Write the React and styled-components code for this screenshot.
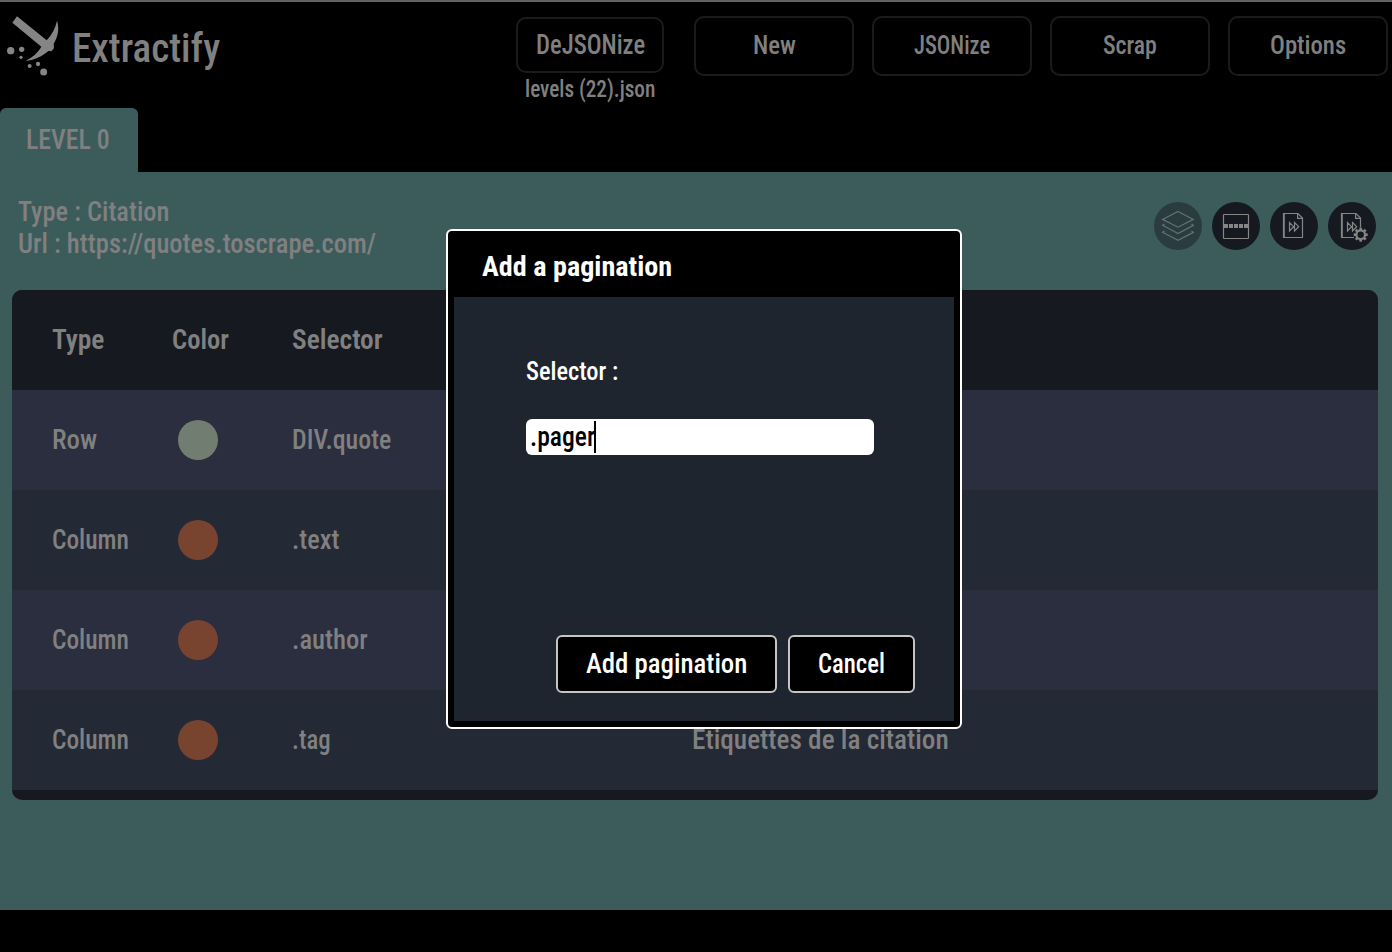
import React, { useLayoutEffect, useRef, useState } from "react";
import styled, { createGlobalStyle } from "styled-components";

const Global = createGlobalStyle`
  * { box-sizing: border-box; }
  body { margin: 0; background: #000; font-family: Roboto, "Open Sans", sans-serif; }
`;

const LabelBox = styled.span`
  display: block;
  flex: none;
  width: ${(p) => p.$width}px;
  height: ${(p) => p.$line}px;
  line-height: ${(p) => p.$line}px;
  font-size: ${(p) => p.$size}px;
  font-weight: ${(p) => p.$weight};
  color: ${(p) => p.$color};
  white-space: nowrap;
`;

const LabelInk = styled.span`
  display: inline-block;
  font-stretch: 75%;
  transform-origin: 0 50%;
`;

/* Condensed text, squeezed horizontally to the given width. */
function Label({ children, width, size = 28, weight = 460, color = "#808080", line = 32 }) {
  const ref = useRef(null);
  const [scale, setScale] = useState(1);
  useLayoutEffect(() => {
    setScale(width / ref.current.offsetWidth);
  }, [width, children]);
  return (
    <LabelBox $width={width} $size={size} $weight={weight} $color={color} $line={line}>
      <LabelInk ref={ref} style={{ transform: `scaleX(${scale})` }}>{children}</LabelInk>
    </LabelBox>
  );
}

const Page = styled.div`
  display: flex;
  flex-direction: column;
  width: 1392px;
  height: 952px;
  overflow: hidden;
  background: #000;
  border-top: 2px solid #626262;
`;

const Header = styled.header`
  display: flex;
  flex: none;
  height: 106px;
  padding: 14px 4px 0 6px;
`;

const Brand = styled.div`
  display: flex;
  flex: 1;
  gap: 12px;
  margin-top: -2px;
`;

const BrandName = styled.div`
  padding-top: 11px;
`;

const Nav = styled.nav`
  display: flex;
  gap: 18px;
`;

const Upload = styled.div`
  display: flex;
  flex-direction: column;
  align-items: center;
  width: 148px;
  margin: 1px 12px 0 0;
`;

const NavButton = styled.button`
  display: flex;
  justify-content: center;
  align-items: center;
  flex: none;
  width: ${(p) => p.$width || 160}px;
  height: ${(p) => p.$height || 60}px;
  padding: 0 0 ${(p) => (p.$height ? 0 : 2)}px;
  background: #000;
  border: 2px solid #1b1b1b;
  border-radius: 10px;
  font-family: inherit;
`;

const Tab = styled.div`
  flex: none;
  width: 138px;
  height: 64px;
  padding: 16px 0 0 26px;
  background: #3c5c5c;
  border-radius: 6px 6px 0 0;
`;

const Main = styled.main`
  flex: none;
  height: 738px;
  padding: 0 14px 0 12px;
  background: #3c5c5c;
`;

const Info = styled.section`
  display: flex;
  justify-content: space-between;
  height: 118px;
  padding: 24px 2px 0 6px;
`;

const Tools = styled.div`
  display: flex;
  gap: 10px;
  padding-top: 6px;
`;

const Tool = styled.div`
  width: 48px;
  height: 48px;
  border-radius: 50%;
  background: ${(p) => (p.$disabled ? "#2a3c3f" : "#161920")};
  color: ${(p) => (p.$disabled ? "#637374" : "#858585")};
  svg { display: block; }
`;

const Table = styled.div`
  padding-bottom: 10px;
  border-radius: 10px;
  overflow: hidden;
  background: #161920;
`;

const Row = styled.div`
  display: grid;
  grid-template-columns: 120px 120px 400px 1fr;
  align-items: center;
  height: 100px;
  padding: 0 0 0 40px;
  background: ${(p) => p.$bg};
`;

const Dot = styled.div`
  width: 40px;
  height: 40px;
  margin-left: 6px;
  border-radius: 50%;
  background: ${(p) => p.$color};
`;

const Dialog = styled.div`
  position: absolute;
  left: 446px;
  top: 229px;
  display: flex;
  flex-direction: column;
  width: 516px;
  height: 500px;
  padding: 0 6px 6px;
  background: #000;
  border: 2px solid #fff;
  border-radius: 6px;
`;

const DialogTitle = styled.div`
  height: 66px;
  padding: 20px 0 0 28px;
`;

const DialogBody = styled.div`
  display: flex;
  flex: 1;
  flex-direction: column;
  padding: 58px 39px 28px 72px;
  background: #1f252e;
`;

const Field = styled.div`
  display: flex;
  align-items: center;
  width: 348px;
  height: 36px;
  margin-top: 32px;
  padding-left: 4px;
  background: #fff;
  border-radius: 6px;
`;

const Caret = styled.div`
  width: 2px;
  height: 32px;
  margin-left: -1px;
  background: #000;
`;

const Actions = styled.div`
  display: flex;
  justify-content: flex-end;
  gap: 11px;
  margin-top: auto;
`;

const ActionButton = styled.button`
  display: flex;
  align-items: center;
  justify-content: center;
  width: ${(p) => p.$width}px;
  height: 58px;
  padding: 0;
  background: #000;
  border: 2px solid #c4c4c4;
  border-radius: 6px;
  font-family: inherit;
`;

const Logo = () => (
  <svg width="54" height="64" viewBox="18 42 162 192" fill="#858585">
    <path d="M51 49 140 121C155 105 166 86 171 62C178 84 175 109 161 131L162 145L154 154L145 153C126 169 101 182 77 182C96 173 112 160 124 140L37 68Z" />
    <circle cx="32" cy="152" r="11" />
    <circle cx="65" cy="148" r="8" />
    <circle cx="63" cy="172" r="5" />
    <circle cx="89" cy="198" r="6" />
    <circle cx="114" cy="192" r="6.5" />
    <circle cx="131" cy="216" r="10.5" />
  </svg>
);

const Icon = ({ children }) => (
  <svg width="48" height="48" viewBox="0 0 48 48" fill="none" stroke="currentColor" strokeWidth="1.2">
    {children}
  </svg>
);

const LayersIcon = () => (
  <Icon>
    <path d="M24 9.5 39.3 17.4 24 25.2 8.6 17.4Z" />
    <path d="M10.5 22 8.6 23.3 24 31.5 39.3 23.3 37.5 22" />
    <path d="M10.5 29 8.6 30.3 24 38.4 39.3 30.3 37.5 29" />
  </Icon>
);

const RowIcon = () => (
  <Icon>
    <rect x="11.5" y="12.5" width="25" height="24" rx="0.7" />
    <path d="M11 24H16M17 24H21M22 24H26M27 24H31M32 24H37" strokeWidth="4" />
  </Icon>
);

const PageIcon = () => (
  <Icon>
    <path d="M13.5 11.5H28L32.5 16V35.5H13.5Z" />
    <path d="M14 11V36" strokeWidth="1.6" />
    <path d="M27.6 11.5V16.4H32.5" />
    <path d="M19.5 20.5V29L23.5 24.7ZM24.5 20.5V29L28.7 24.7Z" />
  </Icon>
);

const teeth = [0, 45, 90, 135, 180, 225, 270, 315];

const PageGearIcon = () => (
  <Icon>
    <path d="M26 35.5H13.5V11.5H28L32.5 16V25.5" />
    <path d="M14 11V36" strokeWidth="1.6" />
    <path d="M27.6 11.5V16.4H32.5" />
    <path d="M19.5 20.5V29L23.5 24.7ZM24.5 20.5V29L28.7 24.7Z" />
    <circle cx="32.7" cy="32.7" r="4.3" strokeWidth="2.2" fill="#161920" />
    {teeth.map((a) => (
      <path key={a} d="M32.7 28.2V25.7" strokeWidth="2.7" transform={`rotate(${a} 32.7 32.7)`} />
    ))}
  </Icon>
);

const navItems = [["New", 43], ["JSONize", 76], ["Scrap", 54], ["Options", 76]];

const rows = [
  { type: "Row", typeW: 45, color: "#717d71", selector: "DIV.quote", selW: 99 },
  { type: "Column", typeW: 77, color: "#78442f", selector: ".text", selW: 47 },
  { type: "Column", typeW: 77, color: "#78442f", selector: ".author", selW: 76 },
  { type: "Column", typeW: 77, color: "#78442f", selector: ".tag", selW: 39, name: "Etiquettes de la citation", nameW: 257 },
];

export default function App() {
  return (
    <>
      <Global />
      <Page>
        <Header>
          <Brand>
            <Logo />
            <BrandName><Label width={148} size={40} line={48}>Extractify</Label></BrandName>
          </Brand>
          <Nav>
            <Upload>
              <NavButton $width={148} $height={56}><Label width={109}>DeJSONize</Label></NavButton>
              <Label width={130} size={24}>levels (22).json</Label>
            </Upload>
            {navItems.map(([text, w]) => (
              <NavButton key={text}><Label width={w} size={26}>{text}</Label></NavButton>
            ))}
          </Nav>
        </Header>
        <Tab><Label width={84}>LEVEL 0</Label></Tab>
        <Main>
          <Info>
            <div>
              <Label width={151}>Type : Citation</Label>
              <Label width={358}>Url : https://quotes.toscrape.com/</Label>
            </div>
            <Tools>
              <Tool $disabled><LayersIcon /></Tool>
              <Tool><RowIcon /></Tool>
              <Tool><PageIcon /></Tool>
              <Tool><PageGearIcon /></Tool>
            </Tools>
          </Info>
          <Table>
            <Row $bg="#161920">
              <Label width={52} weight={650}>Type</Label>
              <Label width={57} weight={650}>Color</Label>
              <Label width={91} weight={650}>Selector</Label>
            </Row>
            {rows.map((r, i) => (
              <Row key={r.selector} $bg={i % 2 ? "#242936" : "#2a2e3f"}>
                <Label width={r.typeW}>{r.type}</Label>
                <Dot $color={r.color} />
                <Label width={r.selW}>{r.selector}</Label>
                {r.name && <Label width={r.nameW}>{r.name}</Label>}
              </Row>
            ))}
          </Table>
        </Main>
      </Page>
      <Dialog>
        <DialogTitle><Label width={190} weight={700} color="#fff">Add a pagination</Label></DialogTitle>
        <DialogBody>
          <Label width={92} size={26} color="#fff">Selector :</Label>
          <Field>
            <Label width={65} color="#000">.pager</Label>
            <Caret />
          </Field>
          <Actions>
            <ActionButton $width={221}><Label width={161} weight={540} color="#fff">Add pagination</Label></ActionButton>
            <ActionButton $width={127}><Label width={67} weight={540} color="#fff">Cancel</Label></ActionButton>
          </Actions>
        </DialogBody>
      </Dialog>
    </>
  );
}
